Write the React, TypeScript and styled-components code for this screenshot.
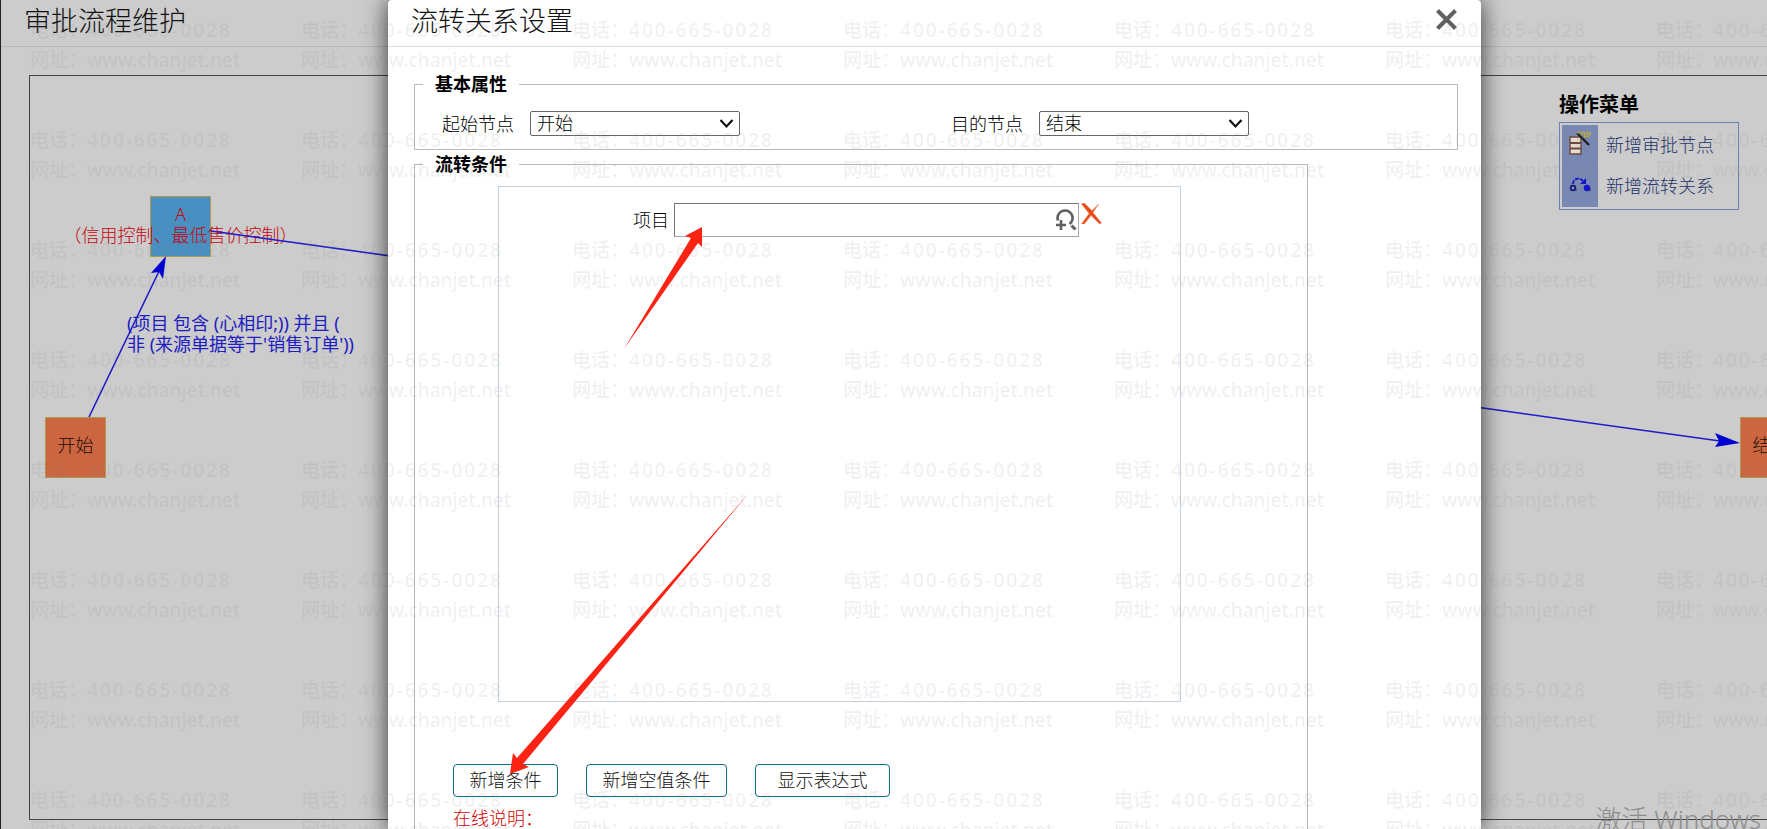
import React from "react";
import styled, { createGlobalStyle } from "styled-components";

const Global = createGlobalStyle`
  * { box-sizing: border-box; }
  html, body, #root { height: 100%; margin: 0; }
  body, button, input, select {
    font-family: "Noto Sans", "Noto Sans CJK SC", sans-serif;
    font-size: 18px;
    font-weight: 300;
  }
  body { background: #ccc; overflow: hidden; }
`;

const Page = styled.div`
  position: relative;
  height: 100%;
  overflow: hidden;
  display: flex;
  flex-direction: column;
  color: #000;
  background: #ccc;
  border-left: 1px solid #222;
`;

const TitleBar = styled.header<{ $line: string }>`
  flex: none;
  display: flex;
  align-items: center;
  justify-content: space-between;
  height: 47px;
  padding: 0 24px 8px 23px;
  border-bottom: 1px solid ${(p) => p.$line};
`;

const Title = styled.h1`
  margin: 4px 0 0;
  font-size: 27px;
  line-height: 38px;
  font-weight: 300;
  color: #111;
`;

const Canvas = styled.main`
  position: relative;
  flex: 1;
  margin: 28px -40px 9px 28px;
  border: 1px solid #444;
`;

const Links = styled.svg`
  position: absolute;
  left: 0;
  top: 0;
  width: 100%;
  height: 100%;
  overflow: visible;
`;

const Node = styled.div<{ $x: number; $y: number; $fill: string }>`
  position: absolute;
  left: ${(p) => p.$x}px;
  top: ${(p) => p.$y}px;
  width: 61px;
  height: 61px;
  padding-bottom: 4px;
  display: flex;
  align-items: center;
  justify-content: center;
  border: 1px solid #b09a50;
  background: ${(p) => p.$fill};
  line-height: 21px;
  text-align: center;
  white-space: nowrap;
`;

const NodeText = styled.span<{ $color: string }>`
  flex: none;
  color: ${(p) => p.$color};
`;

const LinkText = styled.p`
  position: absolute;
  left: 97px;
  top: 237px;
  margin: 0;
  line-height: 21px;
  font-weight: 400;
  white-space: nowrap;
  color: #2020c0;
`;

const Menu = styled.nav`
  position: absolute;
  left: 1529px;
  top: 15px;
  width: 180px;
`;

const MenuTitle = styled.h2`
  margin: 0 0 3px;
  font-size: 20px;
  line-height: 28px;
`;

const MenuList = styled.ul`
  margin: 0;
  padding: 2px;
  list-style: none;
  border: 1px solid #7080ac;
`;

const MenuItem = styled.li`
  display: flex;
  height: 41px;
`;

const MenuIcon = styled.span`
  display: flex;
  align-items: center;
  justify-content: center;
  width: 36px;
  padding-bottom: 4px;
  background: #7888b2;
`;

const MenuLink = styled.a`
  padding-left: 8px;
  line-height: 40px;
  color: #26336a;
  text-decoration: none;
`;

const Overlay = styled.div`
  position: absolute;
  inset: 0;
  display: flex;
  padding: 0 286px 0 387px;
`;

const Dialog = styled.section`
  flex: 1;
  min-width: 0;
  display: flex;
  flex-direction: column;
  background: #fff;
  border-radius: 4px 4px 0 0;
  box-shadow: 0 0 24px rgba(0, 0, 0, 0.75);
  overflow: hidden;
`;

const CloseButton = styled.button`
  display: flex;
  width: 21px;
  height: 21px;
  padding: 0;
  border: 0;
  background: none;
`;

const Body = styled.form`
  flex: 1;
  min-height: 0;
  padding: 24px 23px 0 26px;
`;

const Group = styled.fieldset<{ $inset?: number }>`
  min-width: 0;
  margin: 0 ${(p) => p.$inset ?? 0}px 1px 0;
  padding: 0 8px;
  border: 1px solid #b8b8b8;
`;

const Legend = styled.legend`
  padding: 0 12px;
  line-height: 26px;
  font-weight: 700;
`;

const Fields = styled.div`
  display: grid;
  grid-template-columns: 509px 1fr;
  height: 52px;
  padding: 13px 0 0 19px;
`;

const Field = styled.div`
  display: flex;
  align-items: center;
  gap: 16px;
  height: 26px;
`;

const SelectBox = styled.span`
  position: relative;
  display: flex;
`;

const Select = styled.select`
  appearance: none;
  width: 210px;
  height: 25px;
  padding: 0 24px 0 6px;
  border: 1px solid #666;
  border-radius: 2px;
  background: #fff;
  color: #000;
  line-height: 23px;
`;

const Chevron = styled.svg`
  position: absolute;
  right: 6px;
  top: 7px;
  pointer-events: none;
`;

const Conditions = styled.div`
  width: 683px;
  height: 516px;
  margin: 9px 0 0 75px;
  padding: 16px 0 0 134px;
  border: 1px solid #c3d0d9;
`;

const Condition = styled.div`
  display: flex;
  gap: 2px;
`;

const ConditionLabel = styled.label`
  margin-right: 3px;
  line-height: 34px;
`;

const Lookup = styled.span`
  position: relative;
  display: flex;
  width: 405px;
`;

const LookupInput = styled.input`
  width: 100%;
  height: 34px;
  padding: 0 32px 0 6px;
  border: 1px solid #a5a5a5;
  border-color: #777 #a5a5a5 #a5a5a5 #777;
  outline: 0;
  background: transparent;
`;

const LookupButton = styled.button`
  position: absolute;
  right: 2px;
  top: 6px;
  display: flex;
  width: 22px;
  height: 22px;
  padding: 0;
  border: 0;
  background: none;
`;

const Actions = styled.div`
  display: flex;
  gap: 28px;
  margin: 62px 0 0 30px;
`;

const Action = styled.button<{ $width: number }>`
  width: ${(p) => p.$width}px;
  height: 33px;
  padding: 0;
  border: 1px solid #106e8c;
  border-radius: 4px;
  background: #fff;
  color: #111;
  line-height: 29px;
`;

const Help = styled.p`
  margin: 7px 0 0 30px;
  line-height: 28px;
  color: #d00000;
`;

const Watermarks = styled.div`
  position: absolute;
  inset: 15px 0 0 29px;
  display: grid;
  grid-template-columns: repeat(8, 271px);
  grid-auto-rows: 110px;
  overflow: hidden;
  pointer-events: none;
  font-size: 19px;
  line-height: 30px;
  color: rgba(128, 128, 128, 0.12);
`;

const Mark = styled.div`
  white-space: nowrap;
  font-weight: 500;
`;

const Phone = styled.span`
  letter-spacing: 2px;
`;

const Activation = styled.div`
  position: absolute;
  right: 6px;
  bottom: -8px;
  font-size: 26px;
  line-height: 36px;
  color: #8c8c8c;
`;

const Pointers = styled.svg`
  position: absolute;
  left: 0;
  top: 0;
  pointer-events: none;
`;

const ChevronIcon = () => (
  <Chevron width="15" height="11" viewBox="0 0 15 11" fill="none" stroke="#111" strokeWidth="2.2">
    <path d="M1.5 2 7.5 8.5 13.5 2" />
  </Chevron>
);

const NodeIcon = () => (
  <svg width="24" height="25" viewBox="0 0 24 25">
    <path d="M2 6h11v17H2z" fill="#e6dccb" stroke="#6a4840" strokeWidth="1.4" />
    <path d="M2 12h11M2 17.5h11" stroke="#6a4840" strokeWidth="1.8" />
    <path d="M9 2l12 12" stroke="#222" strokeWidth="2.4" />
    <path d="M9 1.5h15M13 3.5h10M16 5.5h5" stroke="#c4b428" strokeWidth="1.4" strokeDasharray="2 1" />
  </svg>
);

const LinkIcon = () => (
  <svg width="22" height="16" viewBox="0 0 22 16">
    <path d="M4 7C4 1 11 0 14 4" fill="none" stroke="#1414c8" strokeWidth="1.8" strokeDasharray="4 1" />
    <path d="M17 1v6h-6z" fill="#1414c8" />
    <path d="M19 14l3-3v3zM5 14l3-2v2z" fill="#555" />
    <circle cx="4" cy="11" r="2.4" fill="none" stroke="#16167a" strokeWidth="1.6" />
    <circle cx="18" cy="11" r="3.2" fill="#1414c8" />
  </svg>
);

const marks = Array.from({ length: 64 }, (_, i) => i);

export default function App() {
  return (
    <Page>
      <Global />
      <TitleBar $line="#b8b8b8">
        <Title>审批流程维护</Title>
      </TitleBar>
      <Canvas>
        <Node $x={120} $y={120} $fill="#4990c2">
          <NodeText $color="#c4040c">
            A<br />（信用控制、最低售价控制）
          </NodeText>
        </Node>
        <Node $x={15} $y={341} $fill="#cc6640">
          <NodeText $color="#1a0d08">开始</NodeText>
        </Node>
        <Node $x={1710} $y={341} $fill="#cc6640">
          <NodeText $color="#1a0d08">结束</NodeText>
        </Node>
        <Links fill="none" stroke="#1c1cc8" strokeWidth="1.6">
          <path d="M59 341 132 189M181 155 1690 365" />
          <path d="M136 180 121 197 129 196 133 203zM1710 367 1685 357 1689 365 1685 371z" fill="#0000d0" stroke="none" />
        </Links>
        <LinkText>
          (项目 包含 (心相印;)) 并且 (<br />非 (来源单据等于'销售订单'))
        </LinkText>
        <Menu>
          <MenuTitle>操作菜单</MenuTitle>
          <MenuList>
            <MenuItem>
              <MenuIcon><NodeIcon /></MenuIcon>
              <MenuLink href="#node">新增审批节点</MenuLink>
            </MenuItem>
            <MenuItem>
              <MenuIcon><LinkIcon /></MenuIcon>
              <MenuLink href="#link">新增流转关系</MenuLink>
            </MenuItem>
          </MenuList>
        </Menu>
      </Canvas>

      <Overlay>
        <Dialog role="dialog" aria-labelledby="dialog-title">
          <TitleBar $line="#ddd">
            <Title as="h2" id="dialog-title">流转关系设置</Title>
            <CloseButton aria-label="关闭">
              <svg width="21" height="21" viewBox="0 0 21 21" stroke="#606060" strokeWidth="4">
                <path d="M1.5 1.5l18 18M19.5 1.5l-18 18" />
              </svg>
            </CloseButton>
          </TitleBar>
          <Body>
            <Group>
              <Legend>基本属性</Legend>
              <Fields>
                <Field>
                  <label htmlFor="from">起始节点</label>
                  <SelectBox>
                    <Select id="from"><option>开始</option></Select>
                    <ChevronIcon />
                  </SelectBox>
                </Field>
                <Field>
                  <label htmlFor="to">目的节点</label>
                  <SelectBox>
                    <Select id="to"><option>结束</option></Select>
                    <ChevronIcon />
                  </SelectBox>
                </Field>
              </Fields>
            </Group>
            <Group $inset={150}>
              <Legend>流转条件</Legend>
              <Conditions>
                <Condition>
                  <ConditionLabel htmlFor="item">项目</ConditionLabel>
                  <Lookup>
                    <LookupInput id="item" />
                    <LookupButton type="button" aria-label="查找">
                      <svg width="22" height="22" viewBox="0 0 22 22" fill="none" stroke="#606060" strokeWidth="2.6">
                        <path d="M3 11.5A7.5 7.5 0 1 1 14.5 15" />
                        <path d="M1 16h10M6 11v10" />
                        <path d="M16.500 16.500l4 4" strokeWidth="3" />
                      </svg>
                    </LookupButton>
                  </Lookup>
                  <CloseButton type="button" aria-label="删除">
                    <svg width="21" height="21" viewBox="0 0 21 22">
                      <path d="M0 1 3 0 11 8 18 1 12 10 21 21 19 22 10 13 3 22 0 22 8 11z" fill="#e84a18" stroke="#f08860" strokeWidth="0.6" />
                    </svg>
                  </CloseButton>
                </Condition>
              </Conditions>
              <Actions>
                <Action type="button" $width={105}>新增条件</Action>
                <Action type="button" $width={141}>新增空值条件</Action>
                <Action type="button" $width={135}>显示表达式</Action>
              </Actions>
              <Help>在线说明：</Help>
            </Group>
          </Body>
        </Dialog>
      </Overlay>

      <Watermarks aria-hidden="true">
        {marks.map((i) => (
          <Mark key={i}>
            电话：<Phone>400-665-0028</Phone>
            <br />
            网址：www.chanjet.net
          </Mark>
        ))}
      </Watermarks>
      <Pointers width="900" height="829" viewBox="0 0 900 829" fill="#fb2414" aria-hidden="true">
        <path d="M701 227 684 236 690 238 623 349 697 243 701 247z" />
        <path d="M509 774 512 753 516 758 748 493 522 764 528 767z" />
      </Pointers>
      <Activation>激活 Windows</Activation>
    </Page>
  );
}
